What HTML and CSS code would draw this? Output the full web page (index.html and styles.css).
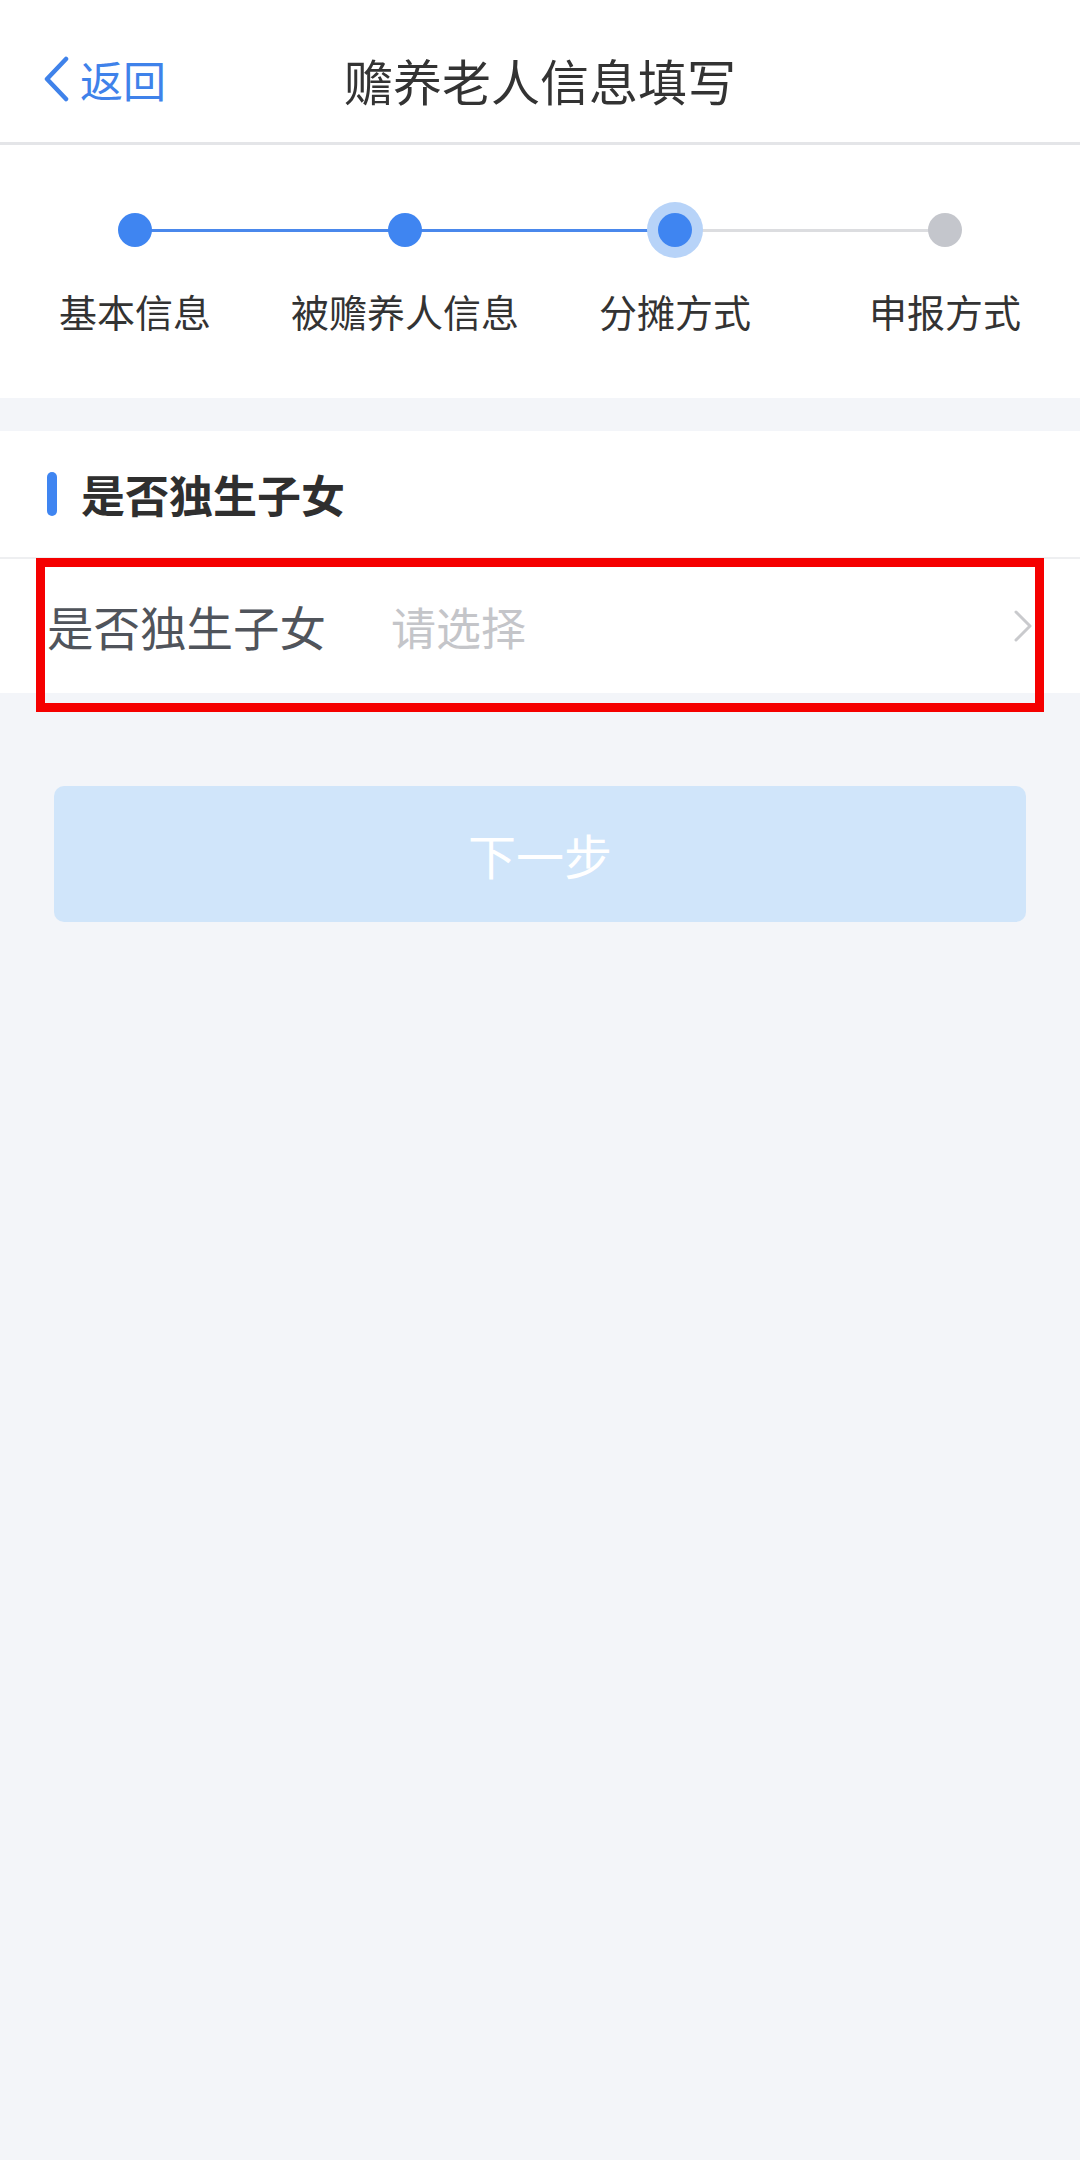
FILE: index.html
```html
<!DOCTYPE html>
<html lang="zh-CN">
<head>
<meta charset="utf-8">
<title>赡养老人信息填写</title>
<link rel="stylesheet" href="styles.css">
</head>
<body>
<div class="page">
  <header class="nav">
    <div class="nav-left">
      <svg class="back-icon" width="28" height="46" viewBox="0 0 28 46"><polyline points="24,3 5,23 24,43" fill="none" stroke="#3f82ea" stroke-width="4.5" stroke-linecap="round" stroke-linejoin="round"/></svg>
      <span class="back-text">返回</span>
    </div>
    <div class="nav-title">赡养老人信息填写</div>
    <div class="nav-right"></div>
  </header>

  <section class="steps">
    <div class="step done line-blue">
      <div class="dot-wrap"><span class="dot"></span></div>
      <div class="step-label">基本信息</div>
    </div>
    <div class="step done line-blue">
      <div class="dot-wrap"><span class="dot"></span></div>
      <div class="step-label">被赡养人信息</div>
    </div>
    <div class="step active line-gray">
      <div class="dot-wrap"><span class="dot"></span></div>
      <div class="step-label">分摊方式</div>
    </div>
    <div class="step todo">
      <div class="dot-wrap"><span class="dot"></span></div>
      <div class="step-label">申报方式</div>
    </div>
  </section>

  <section class="card">
    <div class="card-title"><span class="bar"></span>是否独生子女</div>
    <div class="form-row">
      <span class="row-label">是否独生子女</span>
      <span class="row-value">请选择</span>
      <svg class="row-arrow" width="22" height="34" viewBox="0 0 22 34"><polyline points="4,3 18,17 4,31" fill="none" stroke="#c9cacd" stroke-width="3" stroke-linecap="round" stroke-linejoin="round"/></svg>
    </div>
  </section>

  <div class="actions">
    <button class="next-btn" type="button">下一步</button>
  </div>

  <div class="highlight"></div>
</div>
</body>
</html>
```

FILE: styles.css
```css
* { box-sizing: border-box; }
html, body {
  margin: 0;
  padding: 0;
  background: #f3f5f9;
  font-family: "Noto Sans CJK SC", "Noto Sans", sans-serif;
}
.page {
  position: relative;
  width: 1080px;
  min-height: 2160px;
  background: #f3f5f9;
}

/* header */
.nav {
  height: 145px;
  padding-top: 16px;
  background: #fff;
  border-bottom: 3px solid #e4e5e8;
  display: grid;
  grid-template-columns: 1fr auto 1fr;
  align-items: center;
}
.nav-left {
  display: flex;
  align-items: center;
  padding-left: 42px;
  gap: 10px;
}
.back-icon { display: block; }
.back-text {
  font-size: 43px;
  color: #3f82ea;
  line-height: 1;
}
.nav-title {
  font-size: 49px;
  color: #333;
  line-height: 1;
}

/* steps */
.steps {
  background: #fff;
  height: 253px;
  display: grid;
  grid-template-columns: repeat(4, 1fr);
  padding-top: 57px;
}
.step {
  position: relative;
  display: flex;
  flex-direction: column;
  align-items: center;
}
.dot-wrap {
  position: relative;
  height: 56px;
  width: 100%;
  display: flex;
  align-items: center;
  justify-content: center;
}
.step.line-blue .dot-wrap::after,
.step.line-gray .dot-wrap::after {
  content: "";
  position: absolute;
  left: 50%;
  width: 100%;
  top: 27px;
  height: 3px;
  z-index: 0;
}
.step.line-blue .dot-wrap::after { background: #4a88ec; }
.step.line-gray .dot-wrap::after { background: #dcdde0; }
.dot {
  position: relative;
  z-index: 1;
  width: 34px;
  height: 34px;
  border-radius: 50%;
  background: #3f85f1;
}
.step.active .dot {
  box-shadow: 0 0 0 11px #b7d3f8;
}
.step.todo .dot { background: #c4c6cc; }
.step-label {
  margin-top: 34px;
  font-size: 38px;
  line-height: 1;
  color: #333;
  white-space: nowrap;
}

/* card */
.card {
  margin-top: 33px;
  background: #fff;
}
.card-title {
  height: 128px;
  display: flex;
  align-items: center;
  padding-left: 47px;
  font-size: 44px;
  font-weight: 700;
  color: #2f2f2f;
  border-bottom: 2px solid #eeeff1;
}
.bar {
  width: 10px;
  height: 44px;
  border-radius: 5px;
  background: #3f85f1;
  margin-right: 24px;
}
.form-row {
  height: 134px;
  display: flex;
  align-items: center;
  padding-left: 47px;
  padding-right: 46px;
}
.row-label {
  font-size: 46.5px;
  color: #50545b;
  width: 344px;
  line-height: 1;
}
.row-value {
  font-size: 45px;
  color: #c4c5c9;
  flex: 1;
  line-height: 1;
}
.row-arrow { display: block; }

/* button */
.actions {
  padding: 93px 54px 0;
}
.next-btn {
  display: block;
  width: 100%;
  height: 136px;
  border: none;
  border-radius: 10px;
  background: #d0e5fa;
  color: #fff;
  font-family: "Noto Sans CJK SC", "Noto Sans", sans-serif;
  font-size: 48px;
}

/* annotation overlay */
.highlight {
  position: absolute;
  left: 36px;
  top: 558px;
  width: 1008px;
  height: 154px;
  border: 9px solid #f50000;
  pointer-events: none;
}
```
